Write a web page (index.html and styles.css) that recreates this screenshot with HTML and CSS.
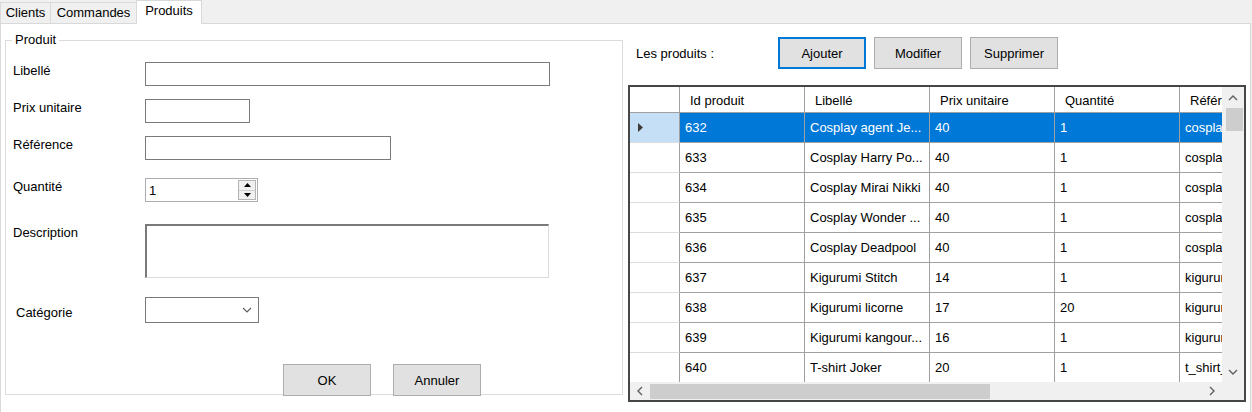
FILE: index.html
```html
<!DOCTYPE html>
<html lang="fr">
<head>
<meta charset="utf-8">
<title>Produits</title>
<link rel="stylesheet" href="styles.css">
</head>
<body>
<div class="window">
  <div class="tabstrip">
    <div class="tab tab-clients">Clients</div>
    <div class="tab tab-commandes">Commandes</div>
    <div class="tab tab-produits active">Produits</div>
  </div>
  <div class="tabpage">
    <fieldset class="groupbox">
      <legend>Produit</legend>
      <div class="form">
        <div class="row row-libelle">
          <label class="lbl">Libellé</label>
          <input class="tb w-libelle" type="text">
        </div>
        <div class="row row-gap13">
          <label class="lbl">Prix unitaire</label>
          <input class="tb w-prix" type="text">
        </div>
        <div class="row row-gap13">
          <label class="lbl">Référence</label>
          <input class="tb w-ref" type="text">
        </div>
        <div class="row row-qte">
          <label class="lbl">Quantité</label>
          <div class="numeric">
            <span class="num-value">1</span>
            <div class="spin">
              <div class="spin-btn"><svg width="7" height="4" viewBox="0 0 7 4"><path d="M0 4 L3.5 0 L7 4 Z" fill="#000"/></svg></div>
              <div class="spin-btn"><svg width="7" height="4" viewBox="0 0 7 4"><path d="M0 0 L7 0 L3.5 4 Z" fill="#000"/></svg></div>
            </div>
          </div>
        </div>
        <div class="row row-desc">
          <label class="lbl">Description</label>
          <textarea class="ta"></textarea>
        </div>
        <div class="row row-cat">
          <label class="lbl lbl-cat">Catégorie</label>
          <div class="combo">
            <svg class="combo-arrow" width="10" height="6" viewBox="0 0 10 6"><path d="M1 1 L5 5 L9 1" fill="none" stroke="#606060" stroke-width="1.2"/></svg>
          </div>
        </div>
        <div class="row actions">
          <button class="btn">OK</button>
          <button class="btn">Annuler</button>
        </div>
      </div>
    </fieldset>

    <section class="panel">
      <div class="toolbar">
        <span class="toolbar-label">Les produits :</span>
        <button class="btn btn-focus">Ajouter</button>
        <button class="btn">Modifier</button>
        <button class="btn">Supprimer</button>
      </div>
      <div class="grid">
        <div class="viewport">
          <div class="grow ghead">
            <div class="c rh"></div>
            <div class="c">Id produit</div>
            <div class="c">Libellé</div>
            <div class="c">Prix unitaire</div>
            <div class="c">Quantité</div>
            <div class="c">Référence</div>
          </div>
          <div class="grow selected">
            <div class="c rh"><svg width="6" height="9" viewBox="0 0 6 9"><path d="M0 0 L5 4.5 L0 9 Z" fill="#3c3c3c"/></svg></div>
            <div class="c">632</div><div class="c">Cosplay agent Je...</div><div class="c">40</div><div class="c">1</div><div class="c">cosplay_agent</div>
          </div>
          <div class="grow">
            <div class="c rh"></div>
            <div class="c">633</div><div class="c">Cosplay Harry Po...</div><div class="c">40</div><div class="c">1</div><div class="c">cosplay_harry</div>
          </div>
          <div class="grow">
            <div class="c rh"></div>
            <div class="c">634</div><div class="c">Cosplay Mirai Nikki</div><div class="c">40</div><div class="c">1</div><div class="c">cosplay_mirai</div>
          </div>
          <div class="grow">
            <div class="c rh"></div>
            <div class="c">635</div><div class="c">Cosplay Wonder ...</div><div class="c">40</div><div class="c">1</div><div class="c">cosplay_wonder</div>
          </div>
          <div class="grow">
            <div class="c rh"></div>
            <div class="c">636</div><div class="c">Cosplay Deadpool</div><div class="c">40</div><div class="c">1</div><div class="c">cosplay_deadpool</div>
          </div>
          <div class="grow">
            <div class="c rh"></div>
            <div class="c">637</div><div class="c">Kigurumi Stitch</div><div class="c">14</div><div class="c">1</div><div class="c">kigurumi_stitch</div>
          </div>
          <div class="grow">
            <div class="c rh"></div>
            <div class="c">638</div><div class="c">Kigurumi licorne</div><div class="c">17</div><div class="c">20</div><div class="c">kigurumi_licorne</div>
          </div>
          <div class="grow">
            <div class="c rh"></div>
            <div class="c">639</div><div class="c">Kigurumi kangour...</div><div class="c">16</div><div class="c">1</div><div class="c">kigurumi_kangourou</div>
          </div>
          <div class="grow">
            <div class="c rh"></div>
            <div class="c">640</div><div class="c">T-shirt Joker</div><div class="c">20</div><div class="c">1</div><div class="c">t_shirt_joker</div>
          </div>
        </div>
        <div class="vscroll">
          <div class="sb-arrow"><svg width="10" height="6" viewBox="0 0 10 6"><path d="M1 5 L5 1 L9 5" fill="none" stroke="#606060" stroke-width="1.4"/></svg></div>
          <div class="vthumb"></div>
          <div class="sb-space"></div>
          <div class="sb-arrow"><svg width="10" height="6" viewBox="0 0 10 6"><path d="M1 1 L5 5 L9 1" fill="none" stroke="#606060" stroke-width="1.4"/></svg></div>
        </div>
        <div class="hscroll">
          <div class="sb-harrow"><svg width="6" height="10" viewBox="0 0 6 10"><path d="M5 1 L1 5 L5 9" fill="none" stroke="#606060" stroke-width="1.4"/></svg></div>
          <div class="hthumb"></div>
          <div class="sb-space"></div>
          <div class="sb-harrow"><svg width="6" height="10" viewBox="0 0 6 10"><path d="M1 1 L5 5 L1 9" fill="none" stroke="#606060" stroke-width="1.4"/></svg></div>
        </div>
        <div class="corner"></div>
      </div>
    </section>
  </div>
</div>
</body>
</html>
```

FILE: styles.css
```css
* { box-sizing: border-box; }

html, body {
  margin: 0;
  padding: 0;
  background: #f0f0f0;
  font-family: "Liberation Sans", Arial, sans-serif;
  font-size: 13px;
  color: #000;
}

.window {
  width: 1252px;
  height: 412px;
  overflow: hidden;
}

/* ---------- tabs ---------- */
.tabstrip {
  display: flex;
  align-items: flex-end;
  height: 23px;
}

.tab {
  height: 21px;
  line-height: 20px;
  text-align: center;
  background: #f0f0f0;
  border: 1px solid #d9d9d9;
  border-bottom: none;
  margin-right: -1px;
  white-space: nowrap;
}

.tab-clients { width: 51px; }
.tab-commandes { width: 87px; }
.tab-produits { width: 66px; }

.tab.active {
  height: 24px;
  line-height: 19px;
  background: #fff;
  margin-bottom: -1px;
  position: relative;
  z-index: 1;
}

.tabpage {
  width: 1251px;
  height: 400px;
  background: #fff;
  border: 1px solid #d9d9d9;
  border-bottom: none;
  display: flex;
  align-items: flex-start;
  gap: 5px;
  padding-left: 4px;
}

/* ---------- group box ---------- */
.groupbox {
  width: 618px;
  height: 363px;
  margin: 8px 0 0 0;
  padding: 0;
  border: 1px solid #dcdcdc;
  min-width: 0;
}

.groupbox legend {
  margin-left: 6px;
  padding: 0 3px;
  line-height: 16px;
  font-size: 13px;
}

.form {
  display: flex;
  flex-direction: column;
  padding: 14px 0 0 7px;
}

.row {
  display: flex;
  align-items: flex-start;
}

.row-gap13 { margin-top: 13px; }
.row-qte { margin-top: 18px; }
.row-desc { margin-top: 22px; }
.row-cat { margin-top: 19px; }

.lbl {
  width: 132px;
  flex: none;
  line-height: 15px;
  padding-top: 1px;
}

.lbl-cat {
  padding-top: 8px;
  padding-left: 3px;
}

.tb {
  height: 24px;
  border: 1px solid #7a7a7a;
  background: #fff;
  padding: 0 3px;
  font: inherit;
  margin: 0;
  outline: none;
}

.w-libelle { width: 405px; }
.w-prix { width: 105px; }
.w-ref { width: 246px; }

.numeric {
  width: 113px;
  height: 24px;
  border: 1px solid #abadb3;
  display: flex;
  align-items: center;
  justify-content: space-between;
  padding: 0 1px 0 3px;
}

.num-value {
  line-height: 15px;
}

.spin {
  width: 18px;
  height: 20px;
  display: flex;
  flex-direction: column;
  border: 1px solid #b4b4b4;
  background: #f0f0f0;
}

.spin-btn {
  flex: 1;
  display: flex;
  align-items: center;
  justify-content: center;
}

.spin-btn + .spin-btn {
  border-top: 1px solid #d0d0d0;
}

.ta {
  width: 404px;
  height: 54px;
  resize: none;
  margin: 0;
  padding: 2px;
  font: inherit;
  background: #fff;
  border-top: 2px solid #7a7a7a;
  border-left: 2px solid #7a7a7a;
  border-right: 1px solid #dcdcdc;
  border-bottom: 1px solid #dcdcdc;
  outline: none;
}

.combo {
  width: 114px;
  height: 26px;
  border: 1px solid #7a7a7a;
  background: #fff;
  display: flex;
  align-items: center;
  justify-content: flex-end;
  padding-right: 6px;
}

/* ---------- buttons ---------- */
.btn {
  width: 88px;
  height: 32px;
  margin: 0;
  padding: 0;
  background: #e1e1e1;
  border: 1px solid #adadad;
  font: inherit;
  color: #000;
}

.btn-focus {
  border: 2px solid #0078d7;
}

.actions {
  margin-top: 41px;
  margin-bottom: -2px;
  padding-left: 270px;
  gap: 22px;
}

/* ---------- right panel ---------- */
.panel {
  width: 618px;
  display: flex;
  flex-direction: column;
}

.toolbar {
  display: flex;
  align-items: center;
  gap: 8px;
  margin-top: 13px;
}

.toolbar-label {
  width: 142px;
  padding-left: 8px;
  flex: none;
}

.grid {
  margin-top: 16px;
  width: 618px;
  height: 317px;
  border: 2px solid #464646;
  display: grid;
  grid-template-columns: 592px 22px;
  grid-template-rows: 295px 18px;
  background: #fff;
}

.viewport {
  overflow: hidden;
}

.grow {
  display: grid;
  grid-template-columns: 50px repeat(5, 125px);
  height: 30px;
  width: 675px;
}

.c {
  border-right: 1px solid #a0a0a0;
  border-bottom: 1px solid #a0a0a0;
  padding-left: 5px;
  display: flex;
  align-items: center;
  white-space: nowrap;
  overflow: hidden;
}

.ghead {
  height: 26px;
}

.ghead .c {
  padding-left: 10px;
  padding-top: 2px;
}

.c.rh {
  padding-left: 8px;
  border-bottom-color: #dcdcdc;
}

.ghead .c.rh {
  border-bottom-color: #a0a0a0;
}

.selected .c {
  background: #0078d7;
  color: #fff;
}

.selected .c.rh {
  background: #c4dff6;
}

/* scrollbars */
.vscroll {
  background: #f0f0f0;
  display: flex;
  flex-direction: column;
  align-items: center;
}

.sb-arrow {
  height: 21px;
  width: 100%;
  display: flex;
  align-items: center;
  justify-content: center;
  flex: none;
}

.vthumb {
  width: 17px;
  height: 23px;
  background: #cdcdcd;
  margin-left: 2px;
  flex: none;
}

.sb-space {
  flex: 1;
}

.hscroll {
  background: #f0f0f0;
  display: flex;
  align-items: center;
}

.sb-harrow {
  width: 20px;
  height: 100%;
  display: flex;
  align-items: center;
  justify-content: center;
  flex: none;
}

.hthumb {
  width: 340px;
  height: 15px;
  background: #cdcdcd;
  flex: none;
}

.corner {
  background: #f0f0f0;
}
```
